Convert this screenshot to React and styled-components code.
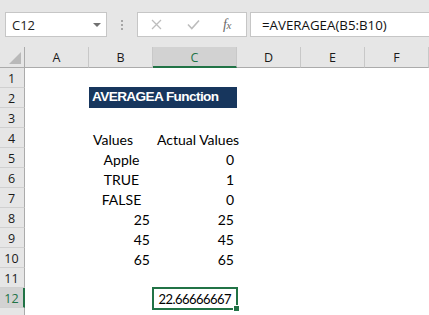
import React from 'react';
import styled, { createGlobalStyle, css } from 'styled-components';

const Global = createGlobalStyle`
  html, body { margin: 0; padding: 0; background: #fff; overflow: hidden; }
  #root { width: 429px; height: 315px; overflow: hidden; }
`;

const COLS = '25px 64px 64px 84px 64px 64px 64px';
const GREEN = '#217346';

const Page = styled.div`
  width: 429px;
  height: 315px;
  overflow: hidden;
  background: #fff;
  display: flex;
  flex-direction: column;
`;

const Toolbar = styled.div`
  height: 47px;
  flex: 0 0 47px;
  box-sizing: border-box;
  background: #e6e6e6;
  display: flex;
  align-items: flex-start;
  padding: 12px 0 0 5px;
  font-family: "Open Sans", "Noto Sans", sans-serif;
`;

const Box = styled.div`
  height: 25px;
  box-sizing: border-box;
  background: #fff;
  border: 1px solid #c6c6c6;
  display: flex;
  align-items: center;
`;

const NameBox = styled(Box)`
  width: 102px;
  padding: 0 5px 0 6px;
  justify-content: space-between;
  font-size: 13px;
  color: #222;
`;

const Caret = styled.span`
  width: 0;
  height: 0;
  border-left: 4px solid transparent;
  border-right: 4px solid transparent;
  border-top: 4px solid #707070;
  margin-top: 1px;
`;

const Grip = styled.div`
  width: 30px;
  height: 25px;
  display: flex;
  flex-direction: column;
  align-items: center;
  justify-content: center;
  gap: 2px;
`;

const Dot = styled.span`
  width: 2px;
  height: 2px;
  background: #a6a6a6;
`;

const FxBox = styled(Box)`
  width: 110px;
  padding: 0 0 0 13px;
`;

const IconSlot = styled.span`
  width: ${p => p.$w}px;
  display: flex;
  align-items: center;
`;

const Fx = styled.span`
  font-family: "Liberation Serif", "DejaVu Serif", serif;
  font-style: italic;
  font-size: 14px;
  color: #6a6a6a;
  letter-spacing: -0.5px;
  & small { font-size: 11px; }
`;

const FormulaInput = styled(Box)`
  flex: 1;
  margin-left: 3px;
  border-right: none;
  padding-left: 11px;
  font-size: 13.3px;
  color: #111;
`;

const Sheet = styled.div`
  flex: 1;
  display: flex;
  flex-direction: column;
`;

const Row = styled.div`
  display: grid;
  grid-template-columns: ${COLS};
  height: ${p => p.$h || 20}px;
  flex: 0 0 ${p => p.$h || 20}px;
`;

const Corner = styled.div`
  background: #e6e6e6;
  border-right: 1px solid #ababab;
  border-bottom: 1px solid #ababab;
  box-sizing: border-box;
  display: flex;
  align-items: flex-end;
  justify-content: flex-end;
  padding: 0 3px 3px 0;
`;

const Tri = styled.span`
  width: 0;
  height: 0;
  border-left: 12px solid transparent;
  border-bottom: 12px solid #b9b9b9;
`;

const ColHead = styled.div`
  box-sizing: border-box;
  background: ${p => (p.$sel ? '#d2d2d2' : '#e6e6e6')};
  border-right: 1px solid #c8c8c8;
  border-bottom: ${p => (p.$sel ? `2px solid ${GREEN}` : '1px solid #ababab')};
  display: flex;
  align-items: center;
  justify-content: center;
  padding-top: ${p => (p.$sel ? 1 : 0)}px;
  font-family: "Open Sans", "Noto Sans", sans-serif;
  font-size: 12.5px;
  color: ${p => (p.$sel ? GREEN : '#1a1a1a')};
`;

const RowHead = styled.div`
  box-sizing: border-box;
  background: ${p => (p.$sel ? '#d2d2d2' : '#e6e6e6')};
  border-bottom: 1px solid #d0d0d0;
  border-right: ${p => (p.$sel ? `2px solid ${GREEN}` : '1px solid #ababab')};
  display: flex;
  align-items: center;
  justify-content: center;
  padding-top: 2px;
  padding-right: ${p => (p.$sel ? 0 : 1)}px;
  font-family: "Open Sans", "Noto Sans", sans-serif;
  font-size: 12.5px;
  color: ${p => (p.$sel ? GREEN : '#1a1a1a')};
`;

const alignMap = { left: 'flex-start', center: 'center', right: 'flex-end' };

const Cell = styled.div`
  position: relative;
  box-sizing: border-box;
  display: flex;
  align-items: flex-end;
  justify-content: ${p => alignMap[p.$align || 'left']};
  padding: 0 3px 0 4px;
  font-family: Lato, "Open Sans", sans-serif;
  font-size: 14px;
  line-height: 16px;
  color: #000;
  white-space: nowrap;
  ${p => p.$span && css`grid-column: span ${p.$span};`}
  ${p => p.$selected && css`
    padding-right: 6px;
    padding-bottom: 1px;
    font-size: 13px;
    letter-spacing: -0.55px;
    &::before {
      content: '';
      position: absolute;
      left: -1px;
      top: -1px;
      right: -1px;
      bottom: -2px;
      border: 2px solid ${GREEN};
      pointer-events: none;
    }
    &::after {
      content: '';
      position: absolute;
      right: -3px;
      bottom: -4px;
      width: 5px;
      height: 5px;
      background: ${GREEN};
      border: 1px solid #fff;
    }
  `}
`;

const TitleCell = styled(Cell)`
  background: #17365d;
  color: #fff;
  font-family: "Liberation Sans", Arial, sans-serif;
  font-weight: bold;
  font-size: 13.6px;
  letter-spacing: -0.6px;
  padding: 0 0 3px 3px;
  margin-top: -1px;
`;

const columns = ['A', 'B', 'C', 'D', 'E', 'F'];

const rows = [
  { n: 1 },
  { n: 2, title: 'AVERAGEA Function' },
  { n: 3 },
  { n: 4, b: ['Values', 'left'], c: ['Actual Values', 'left'] },
  { n: 5, b: ['Apple', 'center'], c: ['0', 'right'] },
  { n: 6, b: ['TRUE', 'center'], c: ['1', 'right'] },
  { n: 7, b: ['FALSE', 'center'], c: ['0', 'right'] },
  { n: 8, b: ['25', 'right'], c: ['25', 'right'] },
  { n: 9, b: ['45', 'right'], c: ['45', 'right'] },
  { n: 10, b: ['65', 'right'], c: ['65', 'right'] },
  { n: 11 },
  { n: 12, c: ['22.66666667', 'right'], sel: true },
  { n: 13, hideLabel: true },
];

function DataRow({ r }) {
  return (
    <Row>
      <RowHead $sel={r.sel}>{r.hideLabel ? '' : r.n}</RowHead>
      <Cell />
      {r.title ? (
        <TitleCell $span={2}>{r.title}</TitleCell>
      ) : (
        <>
          <Cell $align={r.b ? r.b[1] : 'left'}>{r.b ? r.b[0] : ''}</Cell>
          <Cell $align={r.c ? r.c[1] : 'left'} $selected={r.sel}>{r.c ? r.c[0] : ''}</Cell>
        </>
      )}
      <Cell />
      <Cell />
      <Cell />
    </Row>
  );
}

export default function App() {
  return (
    <Page>
      <Global />
      <Toolbar>
        <NameBox>
          <span>C12</span>
          <Caret />
        </NameBox>
        <Grip>
          <Dot />
          <Dot />
          <Dot />
        </Grip>
        <FxBox>
          <IconSlot $w={36}>
            <svg width="11" height="11" viewBox="0 0 11 11">
              <path d="M1 1 L10 10 M10 1 L1 10" stroke="#bdbdbd" strokeWidth="1.3" fill="none" />
            </svg>
          </IconSlot>
          <IconSlot $w={36}>
            <svg width="13" height="11" viewBox="0 0 13 11">
              <path d="M1 5.5 L4.8 9.5 L12 1.5" stroke="#bdbdbd" strokeWidth="1.6" fill="none" />
            </svg>
          </IconSlot>
          <Fx>f<small>x</small></Fx>
        </FxBox>
        <FormulaInput>=AVERAGEA(B5:B10)</FormulaInput>
      </Toolbar>
      <Sheet>
        <Row $h={21}>
          <Corner>
            <Tri />
          </Corner>
          {columns.map(c => (
            <ColHead key={c} $sel={c === 'C'}>{c}</ColHead>
          ))}
        </Row>
        {rows.map(r => (
          <DataRow key={r.n} r={r} />
        ))}
      </Sheet>
    </Page>
  );
}
